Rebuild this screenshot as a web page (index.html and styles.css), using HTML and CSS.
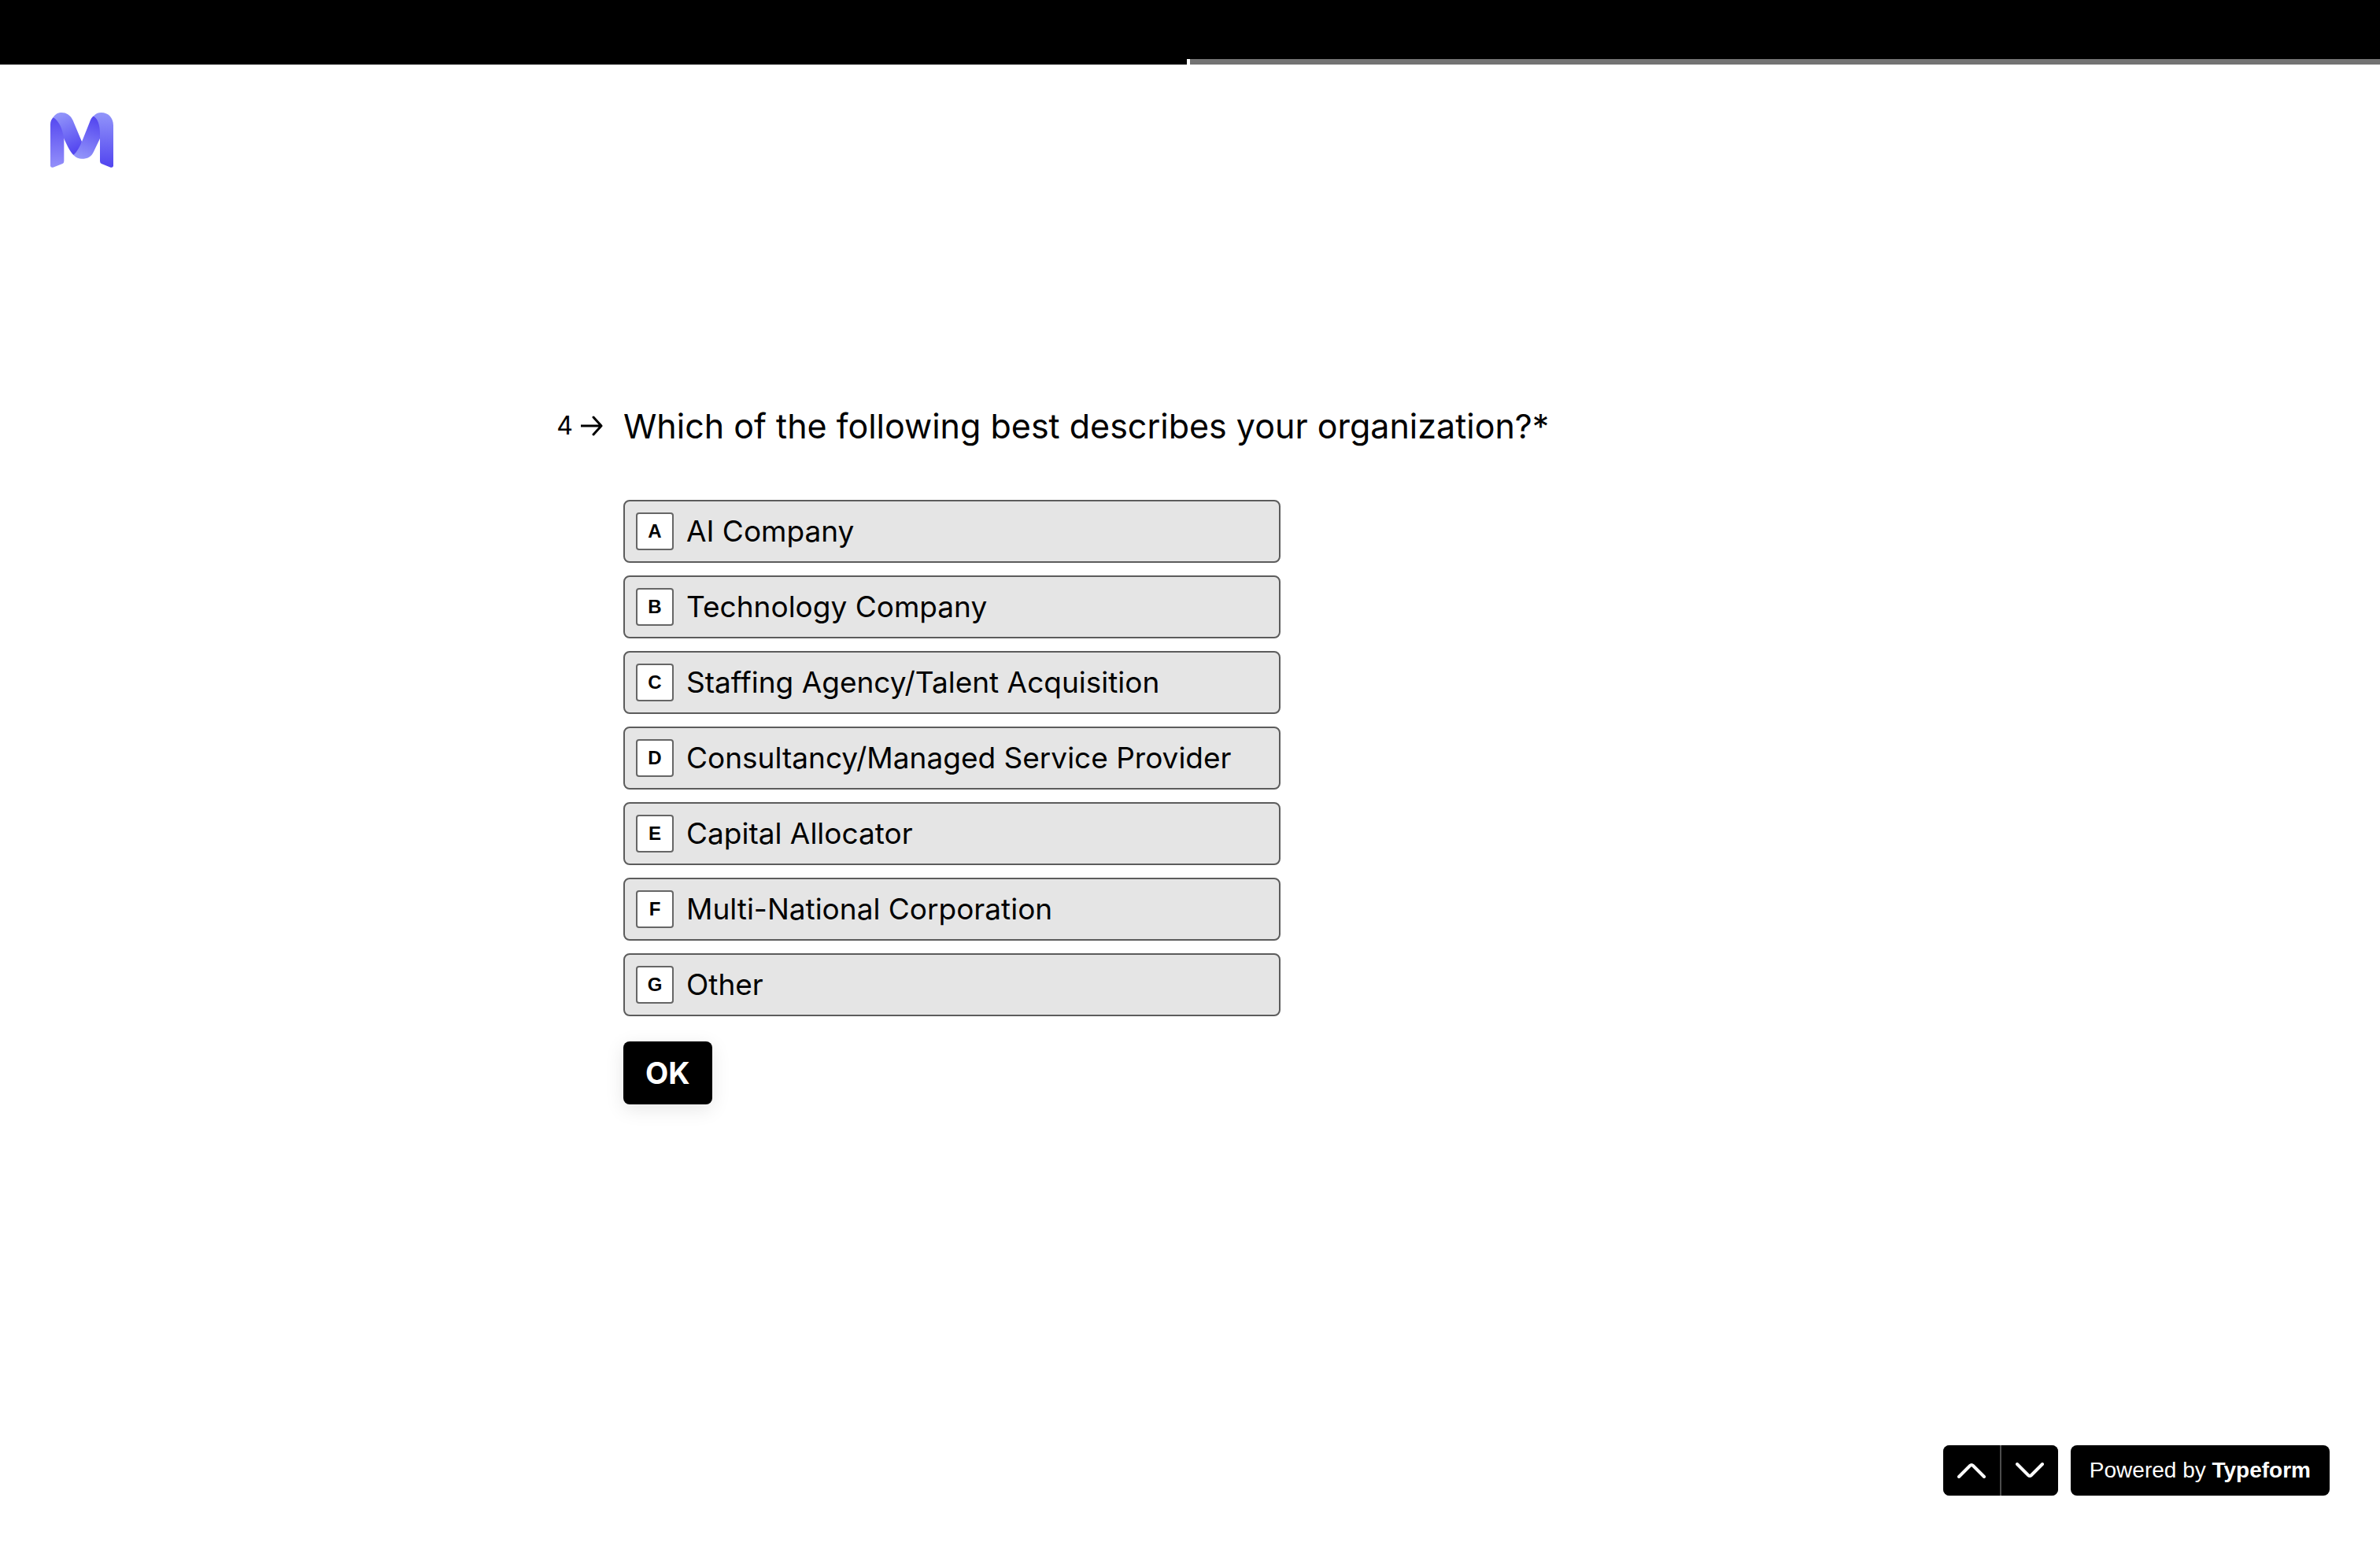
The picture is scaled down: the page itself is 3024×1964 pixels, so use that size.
FILE: index.html
```html
<!DOCTYPE html>
<html lang="en">
<head>
<meta charset="utf-8">
<title>Which of the following best describes your organization?</title>
<link rel="stylesheet" href="styles.css">
</head>
<body>
<div class="topbar">
  <div class="progress" role="progressbar" aria-label="Form progress" aria-valuenow="50" aria-valuemin="0" aria-valuemax="100">
    <div class="progress-done"></div>
    <div class="progress-rest"></div>
  </div>
</div>
<header class="header">
  <svg class="logo" viewBox="72 69 240 210" role="img" aria-label="Logo">
    <defs>
      <linearGradient id="leg-left" x1="0" y1="0" x2="0" y2="1"><stop offset="0" stop-color="#5548f0"/><stop offset="1" stop-color="#9490fa"/></linearGradient>
      <linearGradient id="band-left" gradientUnits="userSpaceOnUse" x1="105" y1="75" x2="170" y2="215"><stop offset="0" stop-color="#9295fa"/><stop offset="1" stop-color="#5447f0"/></linearGradient>
      <linearGradient id="band-mid" gradientUnits="userSpaceOnUse" x1="240" y1="95" x2="185" y2="240"><stop offset="0" stop-color="#5548f0"/><stop offset="1" stop-color="#9294fa"/></linearGradient>
      <linearGradient id="leg-right" x1="0" y1="0" x2="0" y2="1"><stop offset="0" stop-color="#9295fa"/><stop offset="1" stop-color="#5144ef"/></linearGradient>
    </defs>
    <path fill="url(#leg-left)" d="M83 87C76 94 72 103 72 115V272Q73 280 82 278L118 264Q124 261 124 254V168L130 140C119 115 106 96 83 87z"/>
    <path fill="url(#band-left)" d="M83 87C91 74 103 69 115 69C133 69 149 79 158 99L192 180L186 215L160 231C146 216 134 192 123 166C119 135 107 103 83 87z"/>
    <path fill="url(#band-mid)" d="M237 82C229 87 226 95 222 105L192 180C184 200 174 218 160 231C170 242 182 245 192 245C213 245 228 238 237 218L261 168L265 130C262 110 252 90 237 82z"/>
    <path fill="url(#leg-right)" d="M237 82C244 73 254 69 266 69C293 69 312 89 312 118V272Q311 280 302 278L267 264Q261 261 261 254V150C261 118 254 95 237 82z"/>
  </svg>
</header>
<main class="main">
  <form class="question">
    <div class="number">
      <span>4</span>
      <svg class="arrow" viewBox="0 0 28 26" aria-hidden="true"><path d="M0 13H26M16 2L26 13L16 24"/></svg>
    </div>
    <fieldset class="body">
      <legend class="title">Which of the following best describes your organization?*</legend>
      <div class="options">
        <label class="option"><input class="radio" type="radio" name="org"><span class="key">A</span>AI Company</label>
        <label class="option"><input class="radio" type="radio" name="org"><span class="key">B</span>Technology Company</label>
        <label class="option"><input class="radio" type="radio" name="org"><span class="key">C</span>Staffing Agency/Talent Acquisition</label>
        <label class="option"><input class="radio" type="radio" name="org"><span class="key">D</span>Consultancy/Managed Service Provider</label>
        <label class="option"><input class="radio" type="radio" name="org"><span class="key">E</span>Capital Allocator</label>
        <label class="option"><input class="radio" type="radio" name="org"><span class="key">F</span>Multi-National Corporation</label>
        <label class="option"><input class="radio" type="radio" name="org"><span class="key">G</span>Other</label>
      </div>
      <button class="ok" type="button">OK</button>
    </fieldset>
  </form>
</main>
<footer class="footer">
  <div class="nav">
    <button class="nav-button" type="button" aria-label="Previous question"><svg class="chevron" viewBox="0 0 36 20" aria-hidden="true"><path d="M2 18L16 4Q18 2 20 4L34 18"/></svg></button>
    <button class="nav-button" type="button" aria-label="Next question"><svg class="chevron" viewBox="0 0 36 20" aria-hidden="true"><path d="M2 2L16 16Q18 18 20 16L34 2"/></svg></button>
  </div>
  <a class="powered" href="#">Powered by <b>Typeform</b></a>
</footer>
</body>
</html>
```

FILE: styles.css
```css
* {
  box-sizing: border-box;
}

body {
  margin: 0;
  min-height: 100vh;
  display: flex;
  flex-direction: column;
  background: #fff;
  color: #000;
  font-family: Inter, "Liberation Sans", sans-serif;
}

.topbar {
  padding-top: 75px;
  background: #000;
}

.progress {
  display: flex;
  height: 7px;
}

.progress-done {
  width: 50%;
  border-right: 4px solid #fff;
  background: #000;
}

.progress-rest {
  flex: 1;
  background: #737373;
}

.header {
  padding: 61px 64px 0;
}

.logo {
  display: block;
  width: 80px;
  height: 70px;
}

.main {
  flex: 1;
  display: flex;
  align-items: center;
  justify-content: center;
  padding-bottom: 136px;
}

.question {
  display: grid;
  grid-template-columns: 1fr minmax(0, 1440px) 1fr;
  width: 100%;
}

.number {
  display: flex;
  align-items: center;
  justify-content: flex-end;
  gap: 10px;
  height: 60px;
  padding-right: 26px;
  font-size: 32px;
  line-height: 40px;
}

.arrow {
  width: 28px;
  height: 26px;
  fill: none;
  stroke: #000;
  stroke-width: 3;
  stroke-linecap: round;
  stroke-linejoin: round;
}

.body {
  min-width: 0;
  margin: 0;
  padding: 0;
  border: 0;
}

.title {
  padding: 0;
  font-size: 43px;
  line-height: 60px;
}

.options {
  display: grid;
  gap: 16px;
  width: 835px;
  max-width: 100%;
  margin-top: 64px;
}

.option {
  position: relative;
  display: flex;
  align-items: center;
  gap: 16px;
  min-height: 80px;
  padding: 14px;
  border: 2px solid #5c5c5c;
  border-radius: 8px;
  background: #e5e5e5;
  font-size: 37px;
  line-height: 48px;
  cursor: pointer;
}

.radio {
  position: absolute;
  inset: 0;
  margin: 0;
  opacity: 0;
}

.key {
  flex: none;
  width: 48px;
  height: 48px;
  border: 2px solid #666;
  border-radius: 4px;
  background: #fff;
  font: bold 24px/44px "Liberation Sans", sans-serif;
  text-align: center;
}

.ok {
  display: block;
  height: 80px;
  margin-top: 32px;
  padding: 0 28px;
  border: 0;
  border-radius: 8px;
  background: #000;
  box-shadow: 0 6px 24px rgba(0, 0, 0, 0.1);
  color: #fff;
  font: bold 38px/48px Inter, sans-serif;
}

.footer {
  display: flex;
  justify-content: flex-end;
  gap: 16px;
  padding: 0 64px 64px;
}

.nav {
  display: flex;
  gap: 2px;
  border-radius: 8px;
  background: #4d4d4d;
  overflow: hidden;
}

.nav-button {
  display: flex;
  align-items: center;
  justify-content: center;
  width: 72px;
  height: 64px;
  padding: 0;
  border: 0;
  background: #000;
}

.chevron {
  width: 36px;
  height: 20px;
  fill: none;
  stroke: #fff;
  stroke-width: 4;
  stroke-linecap: round;
}

.powered {
  padding: 0 24px;
  border-radius: 8px;
  background: #000;
  color: #fff;
  font: 28px/64px "Liberation Sans", sans-serif;
  text-decoration: none;
}
```
